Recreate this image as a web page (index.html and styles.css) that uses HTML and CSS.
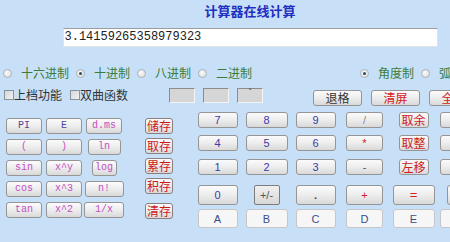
FILE: index.html
```html
<!DOCTYPE html>
<html lang="zh-CN">
<head>
  <meta charset="UTF-8" />
  <title>计算器在线计算</title>
  <link rel="stylesheet" href="styles.css">
</head>
<body>
  <div class="calc">
    <div class="title">计算器在线计算</div>
    <div class="display">3.14159265358979323</div>

    <div class="modes">
      <label class="opt"><span class="radio"></span>十六进制</label>
      <label class="opt"><span class="radio on"></span>十进制</label>
      <label class="opt"><span class="radio"></span>八进制</label>
      <label class="opt"><span class="radio"></span>二进制</label>
      <label class="opt angle"><span class="radio on"></span>角度制</label>
      <label class="opt"><span class="radio"></span>弧度制</label>
    </div>

    <div class="controls">
      <label class="check"><span class="box"></span>上档功能</label>
      <label class="check"><span class="box"></span>双曲函数</label>
      <div class="slots">
        <span class="slot"></span>
        <span class="slot"></span>
        <span class="slot">`</span>
      </div>
      <div class="edit">
        <button class="btn cn">退格</button>
        <button class="btn cn red">清屏</button>
        <button class="btn cn red">全清</button>
      </div>
    </div>

    <div class="keypad">
      <div class="funcs">
        <button class="btn f w36 dark">PI</button>
        <button class="btn f w36 dark">E</button>
        <button class="btn f w36">d.ms</button>
        <button class="btn f w36">(</button>
        <button class="btn f w36">)</button>
        <button class="btn f w33">ln</button>
        <button class="btn f w36">sin</button>
        <button class="btn f w36">x^y</button>
        <button class="btn f w25">log</button>
        <button class="btn f w36">cos</button>
        <button class="btn f w36">x^3</button>
        <button class="btn f w39">n!</button>
        <button class="btn f w36">tan</button>
        <button class="btn f w36">x^2</button>
        <button class="btn f w40">1/x</button>
      </div>

      <div class="memory">
        <button class="btn mem">储存</button>
        <button class="btn mem">取存</button>
        <button class="btn mem">累存</button>
        <button class="btn mem">积存</button>
        <button class="btn mem last">清存</button>
      </div>

      <div class="digits">
        <button class="btn n">7</button>
        <button class="btn n w42">8</button>
        <button class="btn n">9</button>
        <button class="btn op grey">/</button>
        <button class="btn small">取余</button>
        <button class="btn n side"></button>

        <button class="btn n">4</button>
        <button class="btn n w42">5</button>
        <button class="btn n">6</button>
        <button class="btn op red">*</button>
        <button class="btn small">取整</button>
        <button class="btn n side"></button>

        <button class="btn n">1</button>
        <button class="btn n w42">2</button>
        <button class="btn n">3</button>
        <button class="btn op">-</button>
        <button class="btn small">左移</button>
        <button class="btn n side"></button>

        <button class="btn n tall">0</button>
        <button class="btn n tall sign">+/-</button>
        <button class="btn n tall dot">.</button>
        <button class="btn op tall red">+</button>
        <button class="btn n tall w42 red eq">=</button>
        <button class="btn n tall w31 side"></button>

        <button class="btn hex">A</button>
        <button class="btn hex w42">B</button>
        <button class="btn hex">C</button>
        <button class="btn hex w37">D</button>
        <button class="btn hex w42">E</button>
        <button class="btn hex side"></button>
      </div>
    </div>
  </div>
</body>
</html>
```

FILE: styles.css
```css
body {
  margin: 0;
  background-color: #c7e0f8;
  overflow: hidden;
  font-family: "Noto Sans CJK SC", sans-serif;
}

.calc {
  width: 500px;
}

.title {
  height: 22px;
  line-height: 22px;
  text-align: center;
  font-size: 13px;
  font-weight: bold;
  color: #1f2fbf;
}

.display {
  box-sizing: border-box;
  width: 375px;
  height: 19px;
  margin: 6px auto 0;
  padding-left: 1px;
  background: white;
  border: 1px solid #e2e2e2;
  border-top-color: #9c9c9c;
  font-family: "Liberation Mono", monospace;
  font-size: 12px;
  line-height: 17px;
  color: #222;
}

/* radio row */
.modes {
  display: flex;
  align-items: center;
  height: 12px;
  margin-top: 20px;
  padding-left: 3px;
  font-size: 12px;
  color: #3a7d3a;
}

.opt {
  display: flex;
  align-items: center;
  line-height: 12px;
  margin-left: 7px;
}

.opt:first-child { margin-left: 0; }
.opt.angle { margin-left: 108px; }

.radio {
  box-sizing: border-box;
  width: 9px;
  height: 9px;
  margin-right: 9px;
  border: 1px solid #a9b3bd;
  border-radius: 50%;
  background: radial-gradient(circle at 40% 40%, #fafafa, #d9d9d9);
  position: relative;
}

.radio.on::after {
  content: "";
  position: absolute;
  left: 2px;
  top: 2px;
  width: 3px;
  height: 3px;
  border-radius: 50%;
  background: #2f4a5a;
}

/* checkbox / slots / edit buttons row */
.controls {
  display: flex;
  align-items: flex-start;
  height: 18px;
  margin-top: 9px;
  padding-left: 4px;
}

.check {
  display: flex;
  align-items: center;
  margin-top: 1px;
  font-size: 12px;
  line-height: 12px;
  color: #333;
}

.check + .check { margin-left: 8px; }

.box {
  box-sizing: border-box;
  width: 10px;
  height: 10px;
  border: 1px solid #8794a0;
  background: linear-gradient(135deg, #d6d6d6, #f2f2f2);
}

.slots {
  display: flex;
  gap: 8px;
  margin-left: 41px;
}

.slot {
  box-sizing: border-box;
  width: 26px;
  height: 15px;
  background: #d6d6d6;
  border: 1px solid #f4f4f4;
  border-top-color: #8c8c8c;
  border-left-color: #8c8c8c;
  text-align: center;
  font-family: "Liberation Mono", monospace;
  font-size: 11px;
  line-height: 10px;
  color: #333;
}

.edit {
  display: flex;
  gap: 9px;
  margin-left: 50px;
  margin-top: 2px;
}

/* buttons */
.btn {
  box-sizing: border-box;
  height: 16px;
  padding: 0;
  border: 1px solid #959595;
  border-radius: 3px;
  background: linear-gradient(#fbfbfb, #ededed 50%, #d9d9d9);
  font-family: "Liberation Sans", "Noto Sans CJK SC", sans-serif;
  font-size: 11px;
  line-height: 12px;
  color: #333;
  cursor: pointer;
}

.btn.cn {
  width: 49px;
  font-family: "Noto Sans CJK SC", sans-serif;
  font-size: 12px;
}

.red { color: #d42020; }
.grey { color: #8a8a8a; }

.keypad {
  display: flex;
  align-items: flex-start;
  margin-top: 6px;
}

.funcs {
  display: grid;
  grid-template-columns: repeat(3, 40px);
  grid-auto-rows: 21px;
  justify-items: center;
  align-items: start;
  margin-top: 6px;
  padding-left: 4px;
}

.btn.f {
  font-family: "Liberation Mono", monospace;
  font-size: 10px;
  color: #c24fc2;
}

.btn.f.dark { color: #54459a; }

.w25 { width: 25px; }
.w31 { width: 31px; }
.w33 { width: 33px; }
.w36 { width: 36px; }
.w37 { width: 37px; }
.w39 { width: 39px; }
.w40 { width: 40px; }
.w42 { width: 42px; }

.memory {
  display: flex;
  flex-direction: column;
  gap: 4px;
  margin-top: 6px;
  margin-left: 21px;
}

.btn.mem {
  width: 28px;
  border-color: #8a7f7f;
  font-family: "Noto Sans CJK SC", sans-serif;
  font-size: 12px;
  color: #cc1a1a;
}

.btn.mem.last { margin-top: 5px; }

.digits {
  display: grid;
  grid-template-columns: repeat(6, 49px);
  grid-template-rows: 23px 24px 26px 24px 19px;
  justify-items: center;
  align-items: start;
  margin-left: 20px;
}

.btn.n { width: 40px; color: #3a3aa8; }
.btn.n.w42 { width: 42px; }
.btn.n.w31 { width: 31px; }
.btn.n.red { color: #d42020; }
.btn.side { width: 45px; }

.btn.op {
  width: 37px;
  color: #555;
}

.btn.op.grey { color: #8a8a8a; }
.btn.op.red { color: #d42020; }

.btn.small {
  width: 30px;
  font-family: "Noto Sans CJK SC", sans-serif;
  font-size: 12px;
  color: #cc1a1a;
}

.btn.tall { height: 20px; }

.btn.sign {
  width: 26px;
  border-color: #7c7c7c;
  border-radius: 2px;
  background: linear-gradient(#f0f0f0, #d8d8d8);
  color: #555;
}

.btn.dot { color: #444; font-weight: bold; }
.btn.eq { font-size: 13px; }

.btn.hex {
  width: 40px;
  height: 19px;
  border-color: #c6c6c6;
  background: #f6f6f6;
  color: #3d4d8c;
}

.btn.hex.w42 { width: 42px; }
.btn.hex.w37 { width: 37px; }
.btn.hex.side { width: 45px; }
```
